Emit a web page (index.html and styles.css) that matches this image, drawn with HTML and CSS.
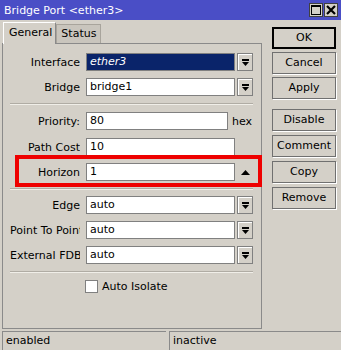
FILE: index.html
```html
<!DOCTYPE html>
<html lang="en">
<head>
  <meta charset="UTF-8">
  <title>Bridge Port &lt;ether3&gt;</title>
  <link rel="stylesheet" href="styles.css">
</head>
<body>
  <div class="window">
    <div class="titlebar">
      <span class="title">Bridge Port &lt;ether3&gt;</span>
      <div class="title-buttons">
        <span class="tbtn">
          <svg width="10" height="10" viewBox="0 0 10 10"><rect x="0.5" y="0.5" width="9" height="9" fill="none" stroke="#000"/><rect x="0" y="0" width="10" height="2" fill="#000"/></svg>
        </span>
        <span class="tbtn">
          <svg width="10" height="10" viewBox="0 0 10 10"><path d="M1 1 L9 9 M9 1 L1 9" stroke="#000" stroke-width="2.2"/></svg>
        </span>
      </div>
    </div>

    <div class="main">
      <div class="left">
        <div class="tabs">
          <div class="tab active">General</div>
          <div class="tab">Status</div>
        </div>
        <div class="panel">
          <div class="row">
            <label class="label">Interface</label>
            <div class="field selected">ether3</div>
            <span class="drop"><svg width="7" height="7" viewBox="0 0 7 7"><rect x="0" y="0" width="7" height="2" fill="#000"/><polygon points="0,3 7,3 3.5,7" fill="#000"/></svg></span>
          </div>
          <div class="row">
            <label class="label">Bridge</label>
            <div class="field">bridge1</div>
            <span class="drop"><svg width="7" height="7" viewBox="0 0 7 7"><rect x="0" y="0" width="7" height="2" fill="#000"/><polygon points="0,3 7,3 3.5,7" fill="#000"/></svg></span>
          </div>
          <div class="sep"></div>
          <div class="row wide">
            <label class="label">Priority:</label>
            <div class="field short">80</div>
            <span class="unit">hex</span>
          </div>
          <div class="row">
            <label class="label">Path Cost</label>
            <div class="field">10</div>
          </div>
          <div class="row">
            <label class="label">Horizon</label>
            <div class="field">1</div>
            <span class="up"><svg width="9" height="5" viewBox="0 0 9 5"><polygon points="0,5 9,5 4.5,0" fill="#000"/></svg></span>
          </div>
          <div class="sep lower"></div>
          <div class="row">
            <label class="label">Edge</label>
            <div class="field">auto</div>
            <span class="drop"><svg width="7" height="7" viewBox="0 0 7 7"><rect x="0" y="0" width="7" height="2" fill="#000"/><polygon points="0,3 7,3 3.5,7" fill="#000"/></svg></span>
          </div>
          <div class="row">
            <label class="label">Point To Point</label>
            <div class="field">auto</div>
            <span class="drop"><svg width="7" height="7" viewBox="0 0 7 7"><rect x="0" y="0" width="7" height="2" fill="#000"/><polygon points="0,3 7,3 3.5,7" fill="#000"/></svg></span>
          </div>
          <div class="row">
            <label class="label">External FDB</label>
            <div class="field">auto</div>
            <span class="drop"><svg width="7" height="7" viewBox="0 0 7 7"><rect x="0" y="0" width="7" height="2" fill="#000"/><polygon points="0,3 7,3 3.5,7" fill="#000"/></svg></span>
          </div>
          <div class="sep lower"></div>
          <div class="check-row">
            <span class="checkbox"></span>
            <span>Auto Isolate</span>
          </div>
          <div class="highlight"></div>
        </div>
      </div>

      <div class="buttons">
        <div class="btn-group">
          <div class="btn default">OK</div>
          <div class="btn">Cancel</div>
          <div class="btn">Apply</div>
        </div>
        <div class="btn-group lower">
          <div class="btn">Disable</div>
          <div class="btn">Comment</div>
          <div class="btn">Copy</div>
          <div class="btn">Remove</div>
        </div>
      </div>
    </div>

    <div class="statusbar">
      <div class="cell first">enabled</div>
      <div class="cell">inactive</div>
    </div>
  </div>
</body>
</html>
```

FILE: styles.css
```css
*{
  box-sizing: border-box;
}
body{
  margin: 0;
  background: #d4d0c8;
  font-family: "DejaVu Sans", sans-serif;
  font-size: 11px;
  color: #000;
}
.window{
  width: 341px;
  height: 350px;
  display: flex;
  flex-direction: column;
  overflow: hidden;
}

/* title bar */
.titlebar{
  height: 20px;
  flex: none;
  background: #4a4ec6;
  color: #fff;
  display: flex;
  align-items: center;
  justify-content: space-between;
  padding: 0 3px 0 4px;
}
.title-buttons{
  display: flex;
  gap: 1px;
}
.tbtn{
  width: 14px;
  height: 14px;
  background: #d4d0c8;
  border: 1px solid #404040;
  display: flex;
  align-items: center;
  justify-content: center;
}

/* main area */
.main{
  flex: 1;
  display: flex;
  padding: 2px 0 0 2px;
}
.left{
  width: 260px;
  display: flex;
  flex-direction: column;
}
.tabs{
  height: 21px;
  display: flex;
  align-items: flex-end;
  padding-left: 1px;
  position: relative;
  z-index: 1;
}
.tab{
  height: 19px;
  padding: 0 4px;
  line-height: 18px;
  background: #c9c5bd;
  border: 1px solid #a8a49c;
  border-bottom: none;
}
.tab.active{
  height: 22px;
  margin-bottom: -1px;
  padding: 0 3px 0 5px;
  line-height: 20px;
  background: #d4d0c8;
  border-color: #fff #8a8a8a #d4d0c8 #fff;
}
.panel{
  flex: 1;
  margin-bottom: 2px;
  border: 1px solid #8a8a8a;
  padding: 9px 0 0 7px;
  position: relative;
}

.row{
  display: flex;
  align-items: center;
  height: 18px;
  margin-bottom: 7px;
}
.row.wide{
  margin-bottom: 8px;
}
.label{
  width: 70px;
  margin-right: 6px;
  text-align: right;
  white-space: nowrap;
  overflow: hidden;
}
.field{
  width: 149px;
  height: 18px;
  border: 1px solid #808080;
  background: #fff;
  padding-left: 3px;
  line-height: 16px;
  white-space: nowrap;
}
.field.short{
  width: 142px;
}
.field.selected{
  background: #0a246a;
  color: #fff;
  font-style: italic;
}
.unit{
  margin-left: 4px;
}
.drop{
  width: 16px;
  height: 18px;
  margin-left: 2px;
  border: 1px solid #808080;
  box-shadow: inset 1px 1px #fff;
  display: flex;
  align-items: center;
  justify-content: center;
}
.up{
  margin-left: 6px;
  display: flex;
  align-items: center;
}
.sep{
  width: 243px;
  border-top: 1px solid #b0aca4;
  border-bottom: 1px solid #f0eee8;
  margin: 0 0 7px 0;
}
.sep.lower{
  margin: 2px 0 6px 0;
}
.check-row{
  display: flex;
  align-items: center;
  gap: 4px;
  margin: 2px 0 0 75px;
  height: 14px;
}
.checkbox{
  width: 13px;
  height: 13px;
  background: #fff;
  border: 1px solid #808080;
}
.highlight{
  position: absolute;
  left: 12px;
  top: 111px;
  width: 247px;
  height: 32px;
  border: 4px solid #ee0000;
}

/* right-hand buttons */
.buttons{
  width: 64px;
  margin: 5px 0 0 10px;
  display: flex;
  flex-direction: column;
  gap: 10px;
}
.btn-group{
  display: flex;
  flex-direction: column;
  gap: 3px;
}
.btn-group.lower{
  gap: 4px;
}
.btn{
  height: 22px;
  border: 1px solid #707070;
  box-shadow: 1px 1px 0 #fff;
  text-align: center;
  line-height: 20px;
}
.btn.default{
  border-color: #000;
  box-shadow: inset 0 0 0 1px #000;
}

/* status bar */
.statusbar{
  height: 19px;
  flex: none;
  display: flex;
  padding-left: 2px;
  gap: 3px;
}
.cell{
  flex: 1;
  border-top: 1px solid #8a8a8a;
  border-left: 1px solid #8a8a8a;
  padding-left: 3px;
  line-height: 18px;
}
.cell.first{
  flex: none;
  width: 164px;
}
```
